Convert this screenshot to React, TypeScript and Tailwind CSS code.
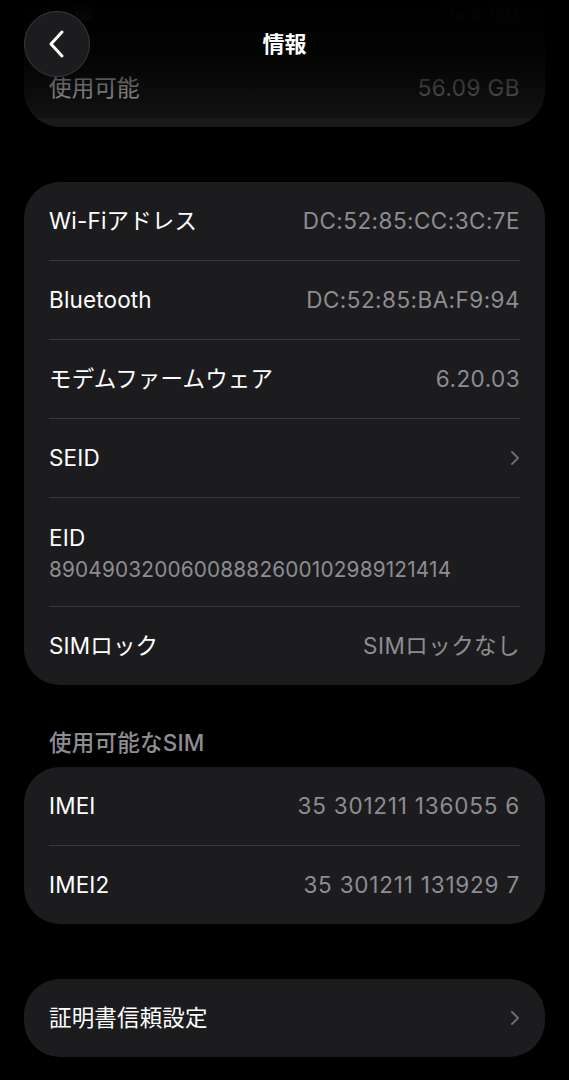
import React from "react";

type Row = { label: string; value?: string; chevron?: boolean; wide?: boolean };

const font = "font-['Inter','Noto_Sans_CJK_JP',sans-serif]";

const Chevron: React.FC = () => (
  <svg width="10" height="16" viewBox="0 0 10 16" fill="none">
    <path d="M2 2l6 6-6 6" stroke="#6b6b70" strokeWidth="2" strokeLinecap="round" strokeLinejoin="round" />
  </svg>
);

const Divider: React.FC = () => <div className="mx-[25px] h-px bg-[#38383b]" />;

const SettingRow: React.FC<{ row: Row }> = ({ row }) => (
  <div className="flex h-[78px] items-center justify-between px-[25px] tracking-[0.01em]">
    <span className="text-[22.5px] text-white">{row.label}</span>
    {row.value && (
      <span className={row.wide ? "text-[22.5px] tracking-[0.035em] text-[#8d8d92]" : "text-[22.5px] tracking-[0.02em] text-[#8d8d92]"}>
        {row.value}
      </span>
    )}
    {row.chevron && <Chevron />}
  </div>
);

const Card: React.FC<{ rows: Row[] }> = ({ rows }) => (
  <div className="mx-[24px] rounded-[36px] bg-[#1c1c1e]">
    {rows.map((r, i) => (
      <React.Fragment key={r.label}>
        {i > 0 && <Divider />}
        <SettingRow row={r} />
      </React.Fragment>
    ))}
  </div>
);

export default function App() {
  return (
    <div className={`relative min-h-[1080px] w-[569px] overflow-hidden bg-black ${font}`}>
      {/* ストレージのカード（上部は隠れている） */}
      <div className="mx-[24px] -mt-[29px] rounded-b-[36px] bg-[#1a1a1c]">
        <div className="flex h-[78px] items-center justify-between px-[25px] blur-[1px]">
          <span className="text-[22.5px] text-white">容量</span>
          <span className="text-[22.5px] text-[#8d8d92]">128 GB</span>
        </div>
        <div className="flex h-[78px] items-center justify-between px-[25px] tracking-[0.01em]">
          <span className="text-[22.5px] text-white">使用可能</span>
          <span className="text-[22.5px] tracking-[0.02em] text-[#8d8d92]">56.09 GB</span>
        </div>
      </div>

      {/* ぼかしヘッダー */}
      <div className="absolute left-0 top-0 h-[118px] w-full bg-gradient-to-b from-black via-black/85 to-black/30" />
      <div className="absolute left-0 top-0 flex h-[88px] w-full items-center justify-center">
        <button className="absolute left-[24px] top-[11px] flex h-[66px] w-[66px] items-center justify-center rounded-full border border-[#3a3a3c] bg-[#1c1c1e]">
          <svg width="18" height="30" viewBox="0 0 18 30" fill="none">
            <path d="M14 3L3 15l11 12" stroke="white" strokeWidth="3" strokeLinecap="round" strokeLinejoin="round" />
          </svg>
        </button>
        <span className="text-[22px] font-bold text-white">情報</span>
      </div>

      <div className="mt-[55px] mx-[24px] rounded-[36px] bg-[#1c1c1e]">
        <SettingRow row={{ label: "Wi-Fiアドレス", value: "DC:52:85:CC:3C:7E" }} />
        <Divider />
        <SettingRow row={{ label: "Bluetooth", value: "DC:52:85:BA:F9:94" }} />
        <Divider />
        <SettingRow row={{ label: "モデムファームウェア", value: "6.20.03" }} />
        <Divider />
        <SettingRow row={{ label: "SEID", chevron: true }} />
        <Divider />
        <div className="flex h-[108px] flex-col justify-center px-[25px] pt-[4px] tracking-[0.01em]">
          <span className="text-[22.5px] leading-[32px] text-white">EID</span>
          <span className="text-[20.8px] leading-[32px] text-[#8d8d92]">89049032006008882600102989121414</span>
        </div>
        <Divider />
        <SettingRow row={{ label: "SIMロック", value: "SIMロックなし" }} />
      </div>

      <div className="mt-[44px] px-[49px] text-[22.5px] font-medium leading-[28px] tracking-[0.01em] text-[#8d8d92]">使用可能なSIM</div>

      <div className="mt-[10px]">
        <Card
          rows={[
            { label: "IMEI", value: "35 301211 136055 6", wide: true },
            { label: "IMEI2", value: "35 301211 131929 7", wide: true },
          ]}
        />
      </div>

      <div className="mt-[55px]">
        <Card rows={[{ label: "証明書信頼設定", chevron: true }]} />
      </div>
    </div>
  );
}
